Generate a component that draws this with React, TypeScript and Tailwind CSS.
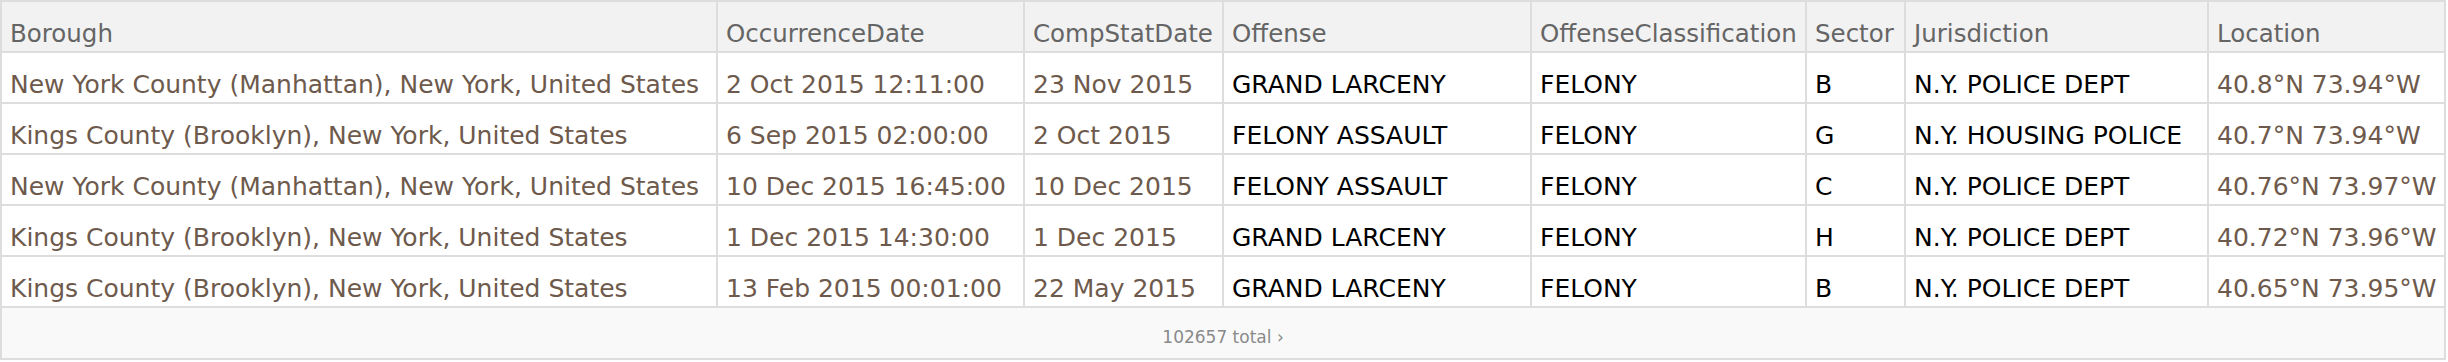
type Row = {
  borough: string
  occurrence: string
  compStat: string
  offense: string
  classification: string
  sector: string
  jurisdiction: string
  location: string
}

const columns = [
  "Borough",
  "OccurrenceDate",
  "CompStatDate",
  "Offense",
  "OffenseClassification",
  "Sector",
  "Jurisdiction",
  "Location",
]

const rows: Row[] = [
  {
    borough: "New York County (Manhattan), New York, United States",
    occurrence: "2 Oct 2015 12:11:00",
    compStat: "23 Nov 2015",
    offense: "GRAND LARCENY",
    classification: "FELONY",
    sector: "B",
    jurisdiction: "N.Y. POLICE DEPT",
    location: "40.8°N 73.94°W",
  },
  {
    borough: "Kings County (Brooklyn), New York, United States",
    occurrence: "6 Sep 2015 02:00:00",
    compStat: "2 Oct 2015",
    offense: "FELONY ASSAULT",
    classification: "FELONY",
    sector: "G",
    jurisdiction: "N.Y. HOUSING POLICE",
    location: "40.7°N 73.94°W",
  },
  {
    borough: "New York County (Manhattan), New York, United States",
    occurrence: "10 Dec 2015 16:45:00",
    compStat: "10 Dec 2015",
    offense: "FELONY ASSAULT",
    classification: "FELONY",
    sector: "C",
    jurisdiction: "N.Y. POLICE DEPT",
    location: "40.76°N 73.97°W",
  },
  {
    borough: "Kings County (Brooklyn), New York, United States",
    occurrence: "1 Dec 2015 14:30:00",
    compStat: "1 Dec 2015",
    offense: "GRAND LARCENY",
    classification: "FELONY",
    sector: "H",
    jurisdiction: "N.Y. POLICE DEPT",
    location: "40.72°N 73.96°W",
  },
  {
    borough: "Kings County (Brooklyn), New York, United States",
    occurrence: "13 Feb 2015 00:01:00",
    compStat: "22 May 2015",
    offense: "GRAND LARCENY",
    classification: "FELONY",
    sector: "B",
    jurisdiction: "N.Y. POLICE DEPT",
    location: "40.65°N 73.95°W",
  },
]

function Cell({ children, entity }: { children: React.ReactNode; entity?: boolean }) {
  return (
    <div
      className={
        "h-[49px] bg-white pl-[8px] pt-[17px] text-[25px] leading-[29px] whitespace-nowrap overflow-hidden " +
        (entity ? "text-[#6e5a4c]" : "text-black")
      }
    >
      {children}
    </div>
  )
}

export default function App() {
  return (
    <div className="bg-white" style={{ fontFamily: '"DejaVu Sans", Verdana, sans-serif' }}>
      <div className="w-[2446px] grid grid-cols-[714px_305px_197px_306px_273px_97px_301px_235px] gap-[2px] p-[2px] bg-[#dddddd]">
        {columns.map((c) => (
          <div
            key={c}
            className="h-[49px] bg-[#f2f2f2] pl-[8px] pt-[17px] text-[24.5px] leading-[29px] text-[#656565] whitespace-nowrap overflow-hidden"
          >
            {c}
          </div>
        ))}

        {rows.map((r, i) => (
          <div key={i} className="contents">
            <Cell entity>{r.borough}</Cell>
            <Cell entity>{r.occurrence}</Cell>
            <Cell entity>{r.compStat}</Cell>
            <Cell>{r.offense}</Cell>
            <Cell>{r.classification}</Cell>
            <Cell>{r.sector}</Cell>
            <Cell>{r.jurisdiction}</Cell>
            <Cell entity>{r.location}</Cell>
          </div>
        ))}

        <div className="col-span-8 h-[50px] bg-[#f9f9f9] pt-[19px] text-center text-[17px] leading-[20px] text-[#8a8a8a]">
          102657 total ›
        </div>
      </div>
    </div>
  )
}
